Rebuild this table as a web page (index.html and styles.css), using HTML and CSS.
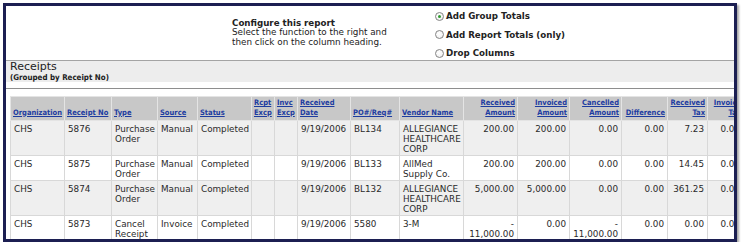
FILE: index.html
```html
<!DOCTYPE html>
<html>
<head>
<meta charset="utf-8">
<link rel="stylesheet" href="styles.css">
</head>
<body>
<div class="frame">
  <div class="config">
    <div class="config-text">
      <div class="config-title">Configure this report</div>
      <div>Select the function to the right and<br>then click on the column heading.</div>
    </div>
    <ul class="options">
      <li><span class="radio checked"></span>Add Group Totals</li>
      <li><span class="radio"></span>Add Report Totals (only)</li>
      <li><span class="radio"></span>Drop Columns</li>
    </ul>
  </div>
  <div class="band">
    <div class="band-title">Receipts</div>
    <div class="band-sub">(Grouped by Receipt No)</div>
  </div>
  <div class="report">
    <table>
      <colgroup>
        <col style="width:54px"><col style="width:47px"><col style="width:46px"><col style="width:40px">
        <col style="width:54px"><col style="width:23px"><col style="width:23px"><col style="width:53px">
        <col style="width:49px"><col style="width:64px"><col style="width:54px"><col style="width:52px">
        <col style="width:52px"><col style="width:46px"><col style="width:40px"><col style="width:36px">
      </colgroup>
      <thead>
        <tr>
          <th><a href="#">Organization</a></th>
          <th><a href="#">Receipt No</a></th>
          <th><a href="#">Type</a></th>
          <th><a href="#">Source</a></th>
          <th><a href="#">Status</a></th>
          <th><a href="#">Rcpt<br>Excp</a></th>
          <th><a href="#">Invc<br>Excp</a></th>
          <th><a href="#">Received<br>Date</a></th>
          <th><a href="#">PO#/Req#</a></th>
          <th><a href="#">Vendor Name</a></th>
          <th class="num"><a href="#">Received<br>Amount</a></th>
          <th class="num"><a href="#">Invoiced<br>Amount</a></th>
          <th class="num"><a href="#">Cancelled<br>Amount</a></th>
          <th class="num"><a href="#">Difference</a></th>
          <th class="num"><a href="#">Received<br>Tax</a></th>
          <th class="num"><a href="#">Invoice<br>Tax</a></th>
        </tr>
      </thead>
      <tbody>
        <tr>
          <td>CHS</td><td>5876</td><td>Purchase Order</td><td>Manual</td><td>Completed</td><td></td><td></td><td>9/19/2006</td><td>BL134</td><td>ALLEGIANCE HEALTHCARE CORP</td>
          <td class="num">200.00</td><td class="num">200.00</td><td class="num">0.00</td><td class="num">0.00</td><td class="num">7.23</td><td class="num">0.00</td>
        </tr>
        <tr>
          <td>CHS</td><td>5875</td><td>Purchase Order</td><td>Manual</td><td>Completed</td><td></td><td></td><td>9/19/2006</td><td>BL133</td><td>AllMed Supply Co.</td>
          <td class="num">200.00</td><td class="num">200.00</td><td class="num">0.00</td><td class="num">0.00</td><td class="num">14.45</td><td class="num">0.00</td>
        </tr>
        <tr>
          <td>CHS</td><td>5874</td><td>Purchase Order</td><td>Manual</td><td>Completed</td><td></td><td></td><td>9/19/2006</td><td>BL132</td><td>ALLEGIANCE HEALTHCARE CORP</td>
          <td class="num">5,000.00</td><td class="num">5,000.00</td><td class="num">0.00</td><td class="num">0.00</td><td class="num">361.25</td><td class="num">0.00</td>
        </tr>
        <tr>
          <td>CHS</td><td>5873</td><td>Cancel Receipt</td><td>Invoice</td><td>Completed</td><td></td><td></td><td>9/19/2006</td><td>5580</td><td>3-M</td>
          <td class="num">-<br>11,000.00</td><td class="num">0.00</td><td class="num">-<br>11,000.00</td><td class="num">0.00</td><td class="num">0.00</td><td class="num">0.00</td>
        </tr>
      </tbody>
    </table>
  </div>
</div>
</body>
</html>
```
FILE: styles.css
```css
html, body {
  margin: 0;
  background: #ffffff;
}
body {
  font-family: "DejaVu Sans", Verdana, sans-serif;
  color: #222;
}
.frame {
  margin: 3px 0 0 3px;
  width: 728px;
  height: 233px;
  border: 3px solid #1c1f52;
  box-shadow: 2px 2px 2px rgba(0, 0, 0, 0.35);
  overflow: hidden;
  background: #fff;
}
.config {
  display: flex;
  box-sizing: border-box;
  height: 55px;
  border-bottom: 1px solid #a4a4a4;
  padding-left: 226px;
}
.config-text {
  width: 203px;
  padding-top: 13px;
  font-size: 8.8px;
  line-height: 9.4px;
}
.config-title {
  font-weight: bold;
  font-size: 8.7px;
}
.options {
  list-style: none;
  margin: 0;
  padding: 5px 0 0;
  display: flex;
  flex-direction: column;
  gap: 8.6px;
  font-weight: bold;
  font-size: 8.7px;
}
.options li {
  display: flex;
  align-items: center;
  height: 10px;
  gap: 2px;
}
.radio {
  box-sizing: border-box;
  width: 9px;
  height: 9px;
  border: 1px solid #858585;
  border-radius: 50%;
  background: radial-gradient(circle at 40% 40%, #ffffff 0, #f4f4f4 60%, #dcdcdc 100%);
  display: flex;
  align-items: center;
  justify-content: center;
}
.radio.checked::after {
  content: "";
  width: 3px;
  height: 3px;
  border-radius: 50%;
  background: #2f9a2f;
}
.band {
  background: #ededed;
  height: 21px;
  padding-left: 4px;
}
.band-title {
  font-size: 11px;
  line-height: 12px;
}
.band-sub {
  font-family: "DejaVu Sans Condensed", "DejaVu Sans", sans-serif;
  font-weight: bold;
  font-size: 7.9px;
  line-height: 9px;
}
.report {
  margin-top: 6px;
  border-top: 1px solid #8e8e8e;
  padding: 7px 0 0 4px;
}
table {
  border-collapse: collapse;
  table-layout: fixed;
  width: 733px;
}
thead tr {
  height: 24px;
}
th {
  background: #c8c8c8;
  border: 1px solid #e4e4e4;
  vertical-align: bottom;
  text-align: left;
  white-space: nowrap;
  padding: 0 2px 3px 2px;
  font-family: "DejaVu Sans Condensed", "DejaVu Sans", sans-serif;
  font-weight: bold;
  font-size: 7.5px;
  line-height: 9.3px;
}
th a {
  color: #1d3ca0;
  text-decoration: underline;
}
td {
  border: 1px solid #d8d8d8;
  vertical-align: top;
  text-align: left;
  padding: 2.5px 3px 1.5px;
  font-size: 8.8px;
  line-height: 10px;
  color: #2a2a2a;
}
tbody tr:nth-child(odd) td {
  background: #efefef;
}
.num {
  text-align: right;
}
```
